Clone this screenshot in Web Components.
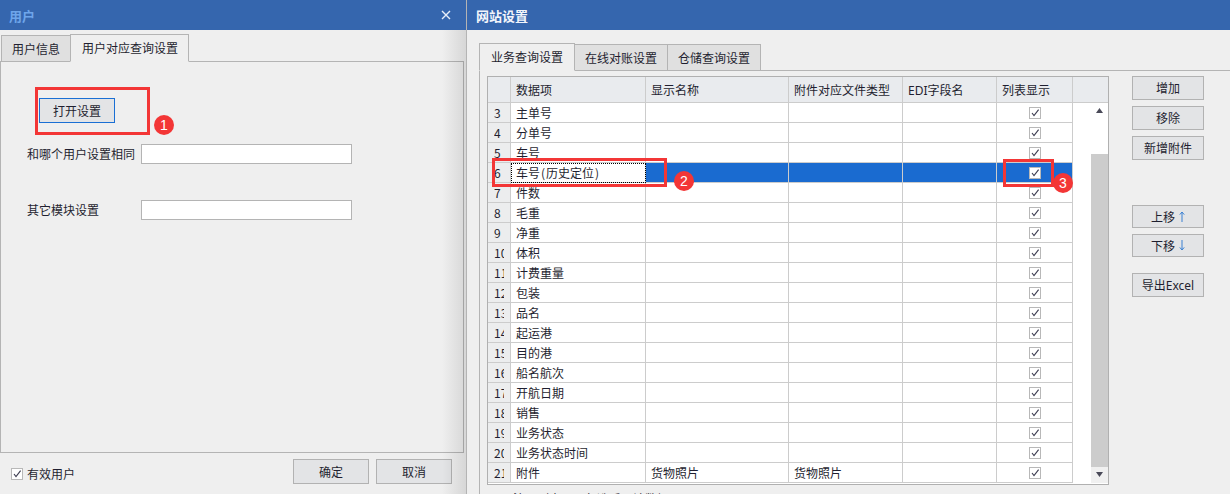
<!DOCTYPE html>
<html lang="zh-CN">
<head>
<meta charset="utf-8">
<title>网站设置</title>
<style>
html, body { margin: 0; height: 494px; overflow: hidden; }
body {
    background: #efefef;
    color: #1f1f30;
    font: 12px/16px "Noto Sans CJK SC", "Noto Sans", sans-serif;
    display: flex;
}
</style>
</head>
<body>
<x-window style="width:467px;box-sizing:border-box;border-right:1px solid #b4b4b4" title-color="#6ea5ea" closable>
    <span slot="title">用户</span>
    <x-tabs inset="1">
        <x-tab slot="tab">用户信息</x-tab>
        <x-tab slot="tab" active>用户对应查询设置</x-tab>
        <user-query-form></user-query-form>
    </x-tabs>
    <user-footer></user-footer>
    <x-shade></x-shade>
</x-window>
<x-window style="flex:1" title-color="#f2f5fb">
    <span slot="title">网站设置</span>
    <x-tabs inset="12" top="13" open-edge>
        <x-tab slot="tab" active>业务查询设置</x-tab>
        <x-tab slot="tab">在线对账设置</x-tab>
        <x-tab slot="tab">仓储查询设置</x-tab>
        <site-query-pane></site-query-pane>
    </x-tabs>
</x-window>

<x-mark x="35" y="87" w="115" h="48" bx="164" by="125" n="1"></x-mark>
<x-mark x="492" y="158" w="175" h="29" bx="684" by="181" n="2"></x-mark>
<x-mark x="1003" y="159" w="51" h="28" bx="1063" by="183" n="3"></x-mark>

<script>
class XWindow extends HTMLElement {
    constructor() {
        super();
        this.attachShadow({mode: 'open'});
        this.shadowRoot.innerHTML = /*html*/`
        <style>
        :host { display: flex; flex-direction: column; position: relative; height: 494px; overflow: hidden; }
        .bar {
            height: 30px;
            flex: none;
            box-sizing: border-box;
            background: #3566ae;
            display: flex;
            align-items: center;
            justify-content: space-between;
            padding: 1px 10px 0 9px;
            font-size: 13px;
            font-weight: 700;
            color: var(--title-color);
        }
        svg { display: block; margin-top: -1px; }
        </style>
        <div class="bar">
            <slot name="title"></slot>
            <svg class="close" width="10" height="10" viewBox="0 0 10 10" fill="none" stroke="#e8eef8" stroke-width="1.4"><path d="M1 1l8 8M9 1l-8 8"/></svg>
        </div>
        <slot></slot>
        `;
    }

    connectedCallback() {
        this.style.setProperty('--title-color', this.getAttribute('title-color'));
        if (!this.hasAttribute('closable')) {
            this.shadowRoot.querySelector('.close').style.display = 'none';
        } else {
            this.shadowRoot.querySelector('.bar').style.paddingRight = '15px';
        }
    }
}

class XTab extends HTMLElement {
    static get style() {
        return /*css*/`
        :host {
            display: block;
            box-sizing: border-box;
            height: 27px;
            padding: 0 10px;
            line-height: 25px;
            background: #e0e0e0;
            border: 1px solid #b4b4b4;
            border-left-width: 0;
            white-space: nowrap;
        }
        :host(:first-child) { border-left-width: 1px; }
        :host([active]) {
            height: 28px;
            padding: 0 10px 0 11px;
            margin-left: -1px;
            line-height: 26px;
            background: #efefef;
            border-left-width: 1px;
            border-bottom-color: #efefef;
            position: relative;
            z-index: 1;
        }
        :host([active]:first-child) { padding: 0 11px; margin-left: 0; }
        `;
    }

    constructor() {
        super();
        this.attachShadow({mode: 'open'});
        this.shadowRoot.innerHTML = `<style>${XTab.style}</style><slot></slot>`;
    }
}

class XTabs extends HTMLElement {
    constructor() {
        super();
        this.attachShadow({mode: 'open'});
        this.shadowRoot.innerHTML = /*html*/`
        <style>
        :host { display: block; flex: none; }
        .strip { display: flex; align-items: flex-end; height: 28px; }
        .body {
            box-sizing: border-box;
            border: 1px solid #b4b4b4;
            margin-top: -1px;
        }
        </style>
        <div class="strip"><slot name="tab"></slot></div>
        <div class="body"><slot></slot></div>
        `;
    }

    connectedCallback() {
        const strip = this.shadowRoot.querySelector('.strip');
        const body = this.shadowRoot.querySelector('.body');
        strip.style.marginTop = (this.getAttribute('top') || 4) + 'px';
        strip.style.paddingLeft = this.getAttribute('inset') + 'px';
        if (this.hasAttribute('open-edge')) {
            // right hand pane: rule runs off the window, no right or bottom edge
            body.style.marginLeft = this.getAttribute('inset') + 'px';
            body.style.borderRight = '0';
            body.style.borderBottom = '0';
        } else {
            body.style.marginRight = '2px';
        }
    }
}

class XBtn extends HTMLElement {
    constructor() {
        super();
        this.attachShadow({mode: 'open'});
        this.shadowRoot.innerHTML = /*html*/`
        <style>
        :host {
            display: flex;
            align-items: center;
            justify-content: center;
            box-sizing: border-box;
            width: 76px;
            height: 25px;
            background: #e3e4e6;
            border: 1px solid #b2b2b2;
            white-space: nowrap;
        }
        :host([focus]) { border-color: #1a6fd4; }
        </style>
        <slot></slot>
        `;
    }
}

class XCheck extends HTMLElement {
    constructor() {
        super();
        this.attachShadow({mode: 'open'});
        this.shadowRoot.innerHTML = /*html*/`
        <style>
        :host { display: block; width: 12px; height: 12px; flex: none; }
        svg { display: block; }
        </style>
        <svg width="12" height="12" viewBox="0 0 12 12">
            <rect x=".5" y=".5" width="11" height="11" fill="#fff" stroke="#b8b8b8"/>
            <path d="M3 6l2 2.6L9.6 2.6" fill="none" stroke="#3c3c50" stroke-width="1.1"/>
        </svg>
        `;
    }
}

class UserQueryForm extends HTMLElement {
    constructor() {
        super();
        this.attachShadow({mode: 'open'});
        this.shadowRoot.innerHTML = /*html*/`
        <style>
        :host { display: block; height: 390px; padding: 36px 0 0 26px; box-sizing: border-box; }
        x-btn { margin-left: 12px; }
        .row { display: flex; align-items: center; }
        .row label { width: 114px; flex: none; }
        .box { width: 211px; height: 20px; box-sizing: border-box; background: #fff; border: 1px solid #b4b4b4; }
        .first { margin-top: 21px; }
        .second { margin-top: 36px; }
        </style>
        <x-btn focus>打开设置</x-btn>
        <div class="row first"><label>和哪个用户设置相同</label><div class="box"></div></div>
        <div class="row second"><label>其它模块设置</label><div class="box"></div></div>
        `;
    }
}

class UserFooter extends HTMLElement {
    constructor() {
        super();
        this.attachShadow({mode: 'open'});
        this.shadowRoot.innerHTML = /*html*/`
        <style>
        :host { display: flex; align-items: flex-start; padding: 6px 14px 0 11px; }
        .valid { display: flex; align-items: center; gap: 4px; margin-top: 7px; flex: 1; }
        .actions { display: flex; gap: 7px; }
        </style>
        <div class="valid"><x-check></x-check><span>有效用户</span></div>
        <div class="actions"><x-btn>确定</x-btn><x-btn>取消</x-btn></div>
        `;
    }
}

class XShade extends HTMLElement {
    constructor() {
        super();
        this.attachShadow({mode: 'open'});
        this.shadowRoot.innerHTML = /*html*/`
        <style>
        :host {
            position: absolute;
            top: 30px; right: 0; bottom: 0;
            width: 24px;
            background: linear-gradient(to right, rgba(0,0,0,0), rgba(0,0,0,.1));
            pointer-events: none;
            z-index: 2;
        }
        </style>
        `;
    }
}

const ROWS = [
    [3, '主单号'], [4, '分单号'], [5, '车号'], [6, '车号<i>(</i>历史定位<i>)</i>'], [7, '件数'],
    [8, '毛重'], [9, '净重'], [10, '体积'], [11, '计费重量'], [12, '包装'],
    [13, '品名'], [14, '起运港'], [15, '目的港'], [16, '船名航次'], [17, '开航日期'],
    [18, '销售'], [19, '业务状态'], [20, '业务状态时间'], [21, '附件', '货物照片', '货物照片'],
];

class DataGrid extends HTMLElement {
    static get style() {
        return /*css*/`
        :host {
            display: block;
            box-sizing: border-box;
            width: 622px;
            height: 409px;
            background: #fff;
            border: 1px solid #b0b0b0;
            flex: none;
        }
        .row {
            display: grid;
            grid-template-columns: 23px 135px 143px 114px 94px 76px;
            height: 20px;
        }
        .cell {
            box-sizing: border-box;
            border-right: 1px solid #ccc;
            border-bottom: 1px solid #ccc;
            padding-left: 5px;
            line-height: 19px;
            white-space: nowrap;
            overflow: hidden;
        }
        .cell i { font-style: normal; margin: 0 1px; }
        .en { font-family: "Noto Sans", sans-serif; }
        .num { background: #ecedee; padding-left: 6px; }
        .num span { display: block; width: 10px; overflow: hidden; }
        .head {
            background: #e9ebee;
            height: 26px;
            grid-template-columns: 23px 135px 143px 114px 94px 76px 1fr;
        }
        .head .cell { line-height: 25px; }
        .head .cell:last-child { border-right: 0; }
        .body { display: flex; }
        .rows { flex: 1; }
        .tick { display: flex; align-items: center; justify-content: center; padding-left: 0; }
        .sel .cell:not(.num):not(.cur) { background: #1a6bd0; }
        .sel .cur { outline: 1px dotted #000; outline-offset: -1px; }
        .bar { width: 17px; height: 380px; display: flex; flex-direction: column; }
        .up { height: 51px; padding-top: 5px; box-sizing: border-box; }
        .thumb { height: 313px; background: #ccc; }
        .down { height: 16px; background: #f0f0f0; padding-top: 5px; box-sizing: border-box; }
        svg { display: block; margin: 0 auto; }
        `;
    }

    constructor() {
        super();
        this.attachShadow({mode: 'open'});
        const rows = ROWS.map(([n, name, show = '', type = '']) => /*html*/`
            <div class="row${n === 6 ? ' sel' : ''}">
                <div class="cell num"><span>${n}</span></div>
                <div class="cell${n === 6 ? ' cur' : ''}">${name}</div>
                <div class="cell">${show}</div>
                <div class="cell">${type}</div>
                <div class="cell"></div>
                <div class="cell tick"><x-check></x-check></div>
            </div>`).join('');
        this.shadowRoot.innerHTML = /*html*/`
        <style>${DataGrid.style}</style>
        <div class="row head">
            <div class="cell"></div>
            <div class="cell">数据项</div>
            <div class="cell">显示名称</div>
            <div class="cell">附件对应文件类型</div>
            <div class="cell"><span class="en">EDI</span>字段名</div>
            <div class="cell">列表显示</div>
            <div class="cell"></div>
        </div>
        <div class="body">
            <div class="rows">${rows}</div>
            <div class="bar">
                <div class="up"><svg width="7" height="5"><path d="M3.5 0L7 5H0z" fill="#4a4a58"/></svg></div>
                <div class="thumb"></div>
                <div class="down"><svg width="7" height="5"><path d="M0 0h7L3.5 5z" fill="#4a4a58"/></svg></div>
            </div>
        </div>
        `;
    }
}

class SiteQueryPane extends HTMLElement {
    constructor() {
        super();
        this.attachShadow({mode: 'open'});
        this.shadowRoot.innerHTML = /*html*/`
        <style>
        :host { display: block; height: 423px; padding: 5px 0 0 7px; box-sizing: border-box; }
        .main { display: flex; gap: 23px; }
        .side { display: flex; flex-direction: column; }
        x-btn { width: 72px; height: 24px; margin-bottom: 6px; }
        .gap1 { margin-top: 39px; }
        .small { height: 23px; }
        .gap2 { margin-top: 10px; }
        svg { display: block; margin-left: 4px; }
        .en { font-family: "Noto Sans", sans-serif; }
        .note { margin: 6px 0 0 26px; white-space: nowrap; }
        </style>
        <div class="main">
            <data-grid></data-grid>
            <div class="side">
                <x-btn>增加</x-btn>
                <x-btn>移除</x-btn>
                <x-btn>新增附件</x-btn>
                <x-btn class="gap1 small">上移<svg width="6" height="11" fill="none" stroke="#3a80d2"><path d="M3 11V1M.8 3.6L3 1l2.2 2.6"/></svg></x-btn>
                <x-btn class="small">下移<svg width="6" height="11" fill="none" stroke="#3a80d2"><path d="M3 0v10M.8 7.4L3 10l2.2-2.6"/></svg></x-btn>
                <x-btn class="gap2"><span>导出<span class="en">Excel</span></span></x-btn>
            </div>
        </div>
        <div class="note">注：列表显示勾选后，该数据项显示</div>
        `;
    }
}

class XMark extends HTMLElement {
    constructor() {
        super();
        this.attachShadow({mode: 'open'});
        this.shadowRoot.innerHTML = /*html*/`
        <style>
        :host { position: absolute; left: 0; top: 0; z-index: 5; }
        .rect, .dot { position: absolute; box-sizing: border-box; }
        .rect { border: 3px solid #f33636; }
        .dot {
            width: 20px; height: 20px;
            border-radius: 50%;
            background: #f33636;
            color: #fff;
            text-align: center;
            font: 14px/20px "Liberation Sans", sans-serif;
        }
        </style>
        <div class="rect"></div>
        <div class="dot"></div>
        `;
    }

    connectedCallback() {
        const px = name => this.getAttribute(name) + 'px';
        const rect = this.shadowRoot.querySelector('.rect').style;
        rect.left = px('x');
        rect.top = px('y');
        rect.width = px('w');
        rect.height = px('h');
        const dot = this.shadowRoot.querySelector('.dot');
        dot.style.left = (this.getAttribute('bx') - 10) + 'px';
        dot.style.top = (this.getAttribute('by') - 10) + 'px';
        dot.textContent = this.getAttribute('n');
    }
}

customElements.define('x-window', XWindow);
customElements.define('x-tab', XTab);
customElements.define('x-tabs', XTabs);
customElements.define('x-btn', XBtn);
customElements.define('x-check', XCheck);
customElements.define('user-query-form', UserQueryForm);
customElements.define('user-footer', UserFooter);
customElements.define('x-shade', XShade);
customElements.define('data-grid', DataGrid);
customElements.define('site-query-pane', SiteQueryPane);
customElements.define('x-mark', XMark);
</script>
</body>
</html>
